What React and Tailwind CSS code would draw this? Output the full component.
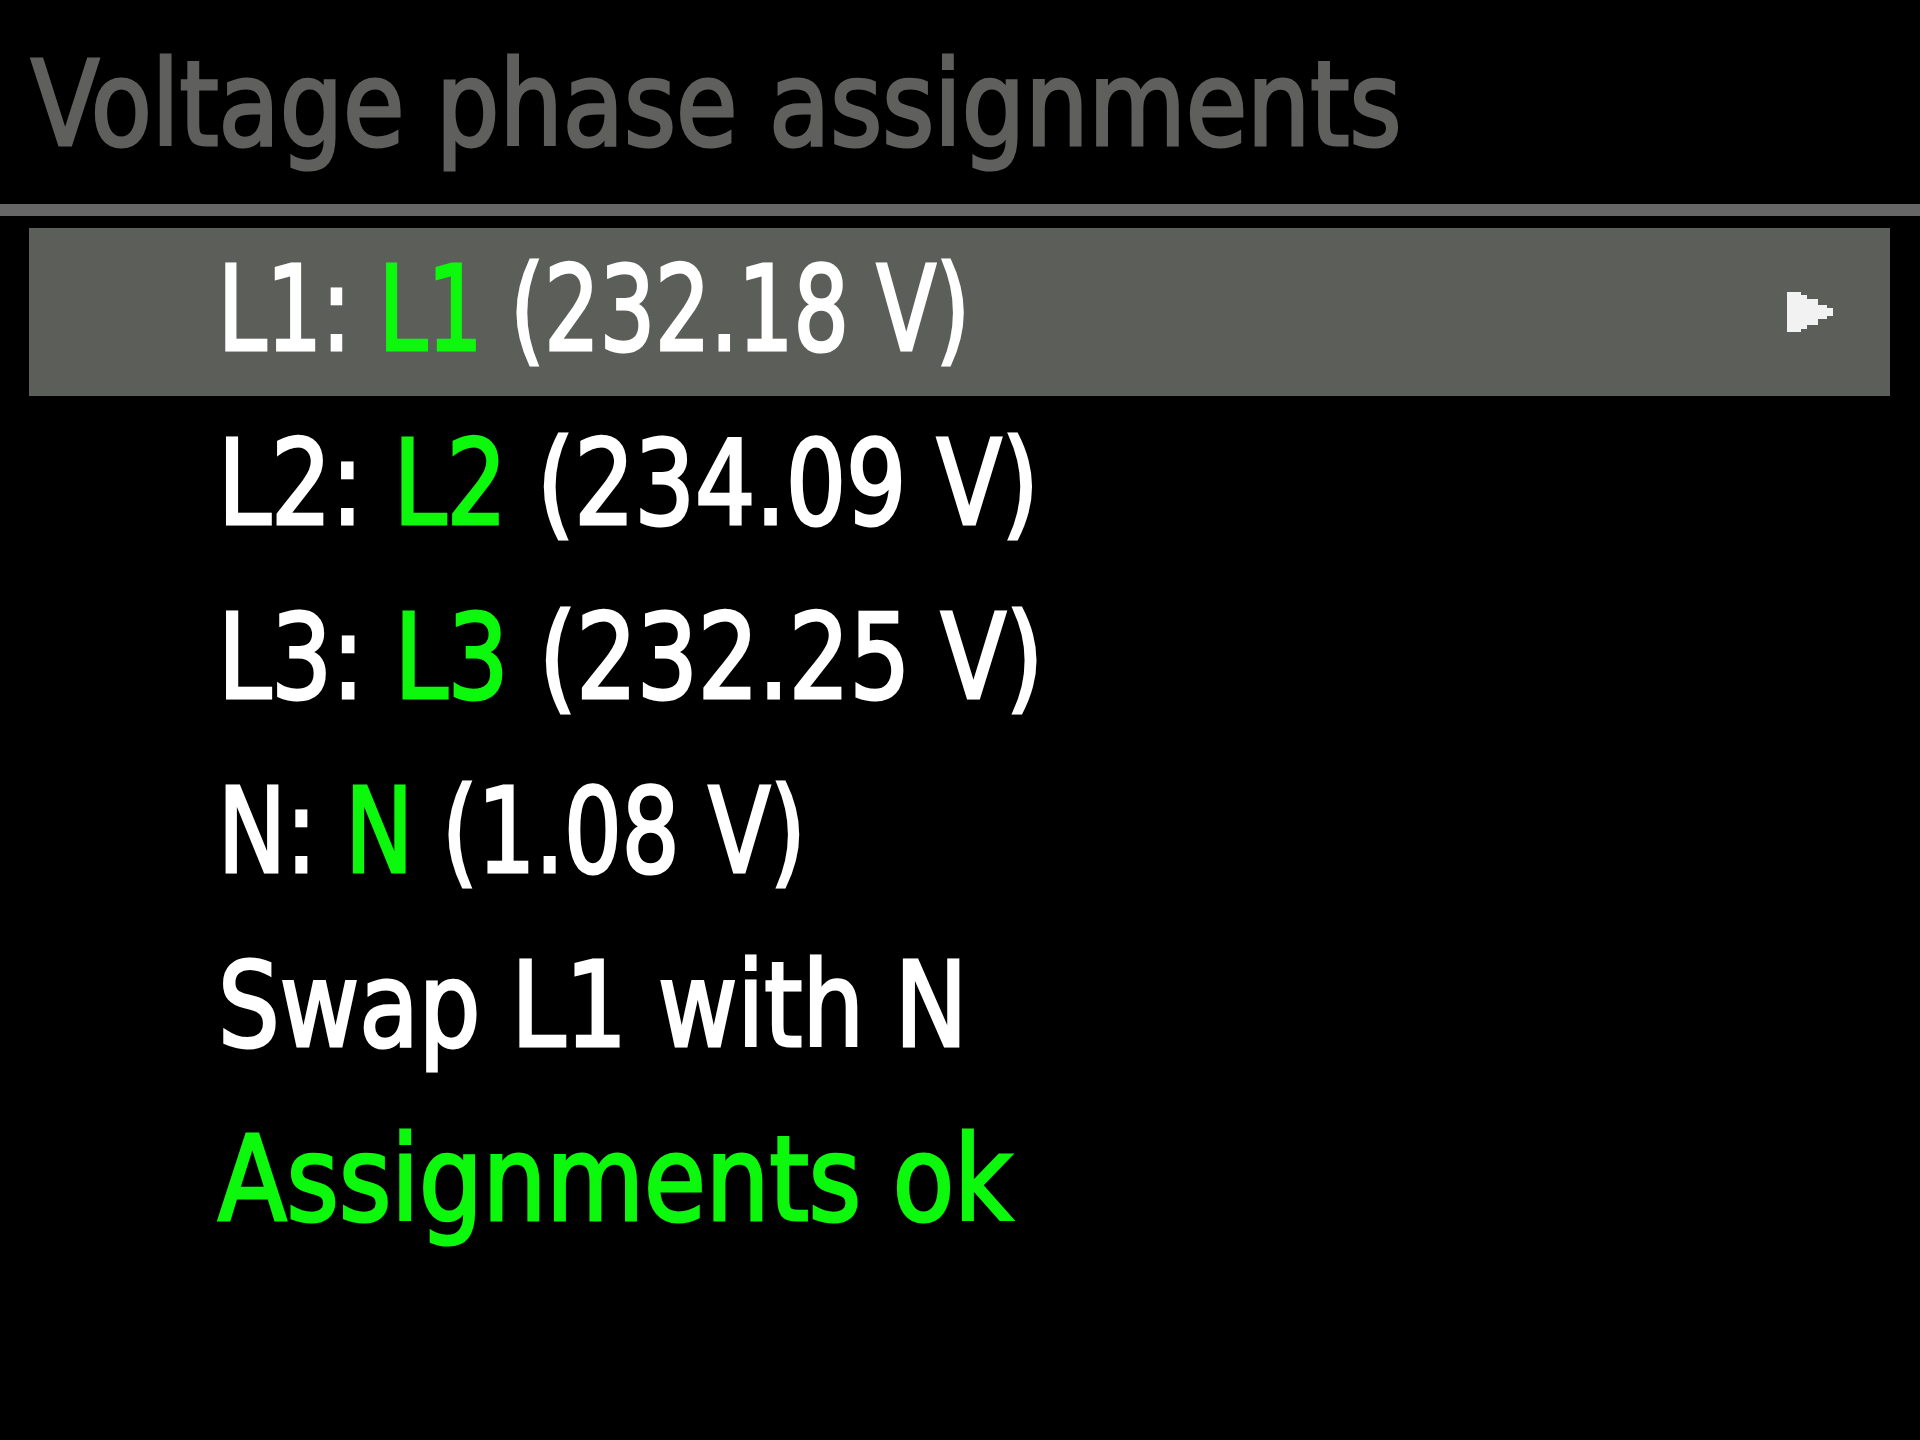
import React from 'react';

const rows = [
  { label: 'L1:', phase: 'L1', value: '(232.18 V)', selected: true, sx: 'scale-x-[0.82]' },
  { label: 'L2:', phase: 'L2', value: '(234.09 V)', sx: 'scale-x-[0.895]' },
  { label: 'L3:', phase: 'L3', value: '(232.25 V)', sx: 'scale-x-[0.9]' },
  { label: 'N:', phase: 'N', value: '(1.08 V)', sx: 'scale-x-[0.855]' },
];

const font = { fontFamily: '"DejaVu Sans Condensed", "DejaVu Sans", sans-serif' };

const Arrow = () => (
  <svg width="46" height="40" viewBox="0 0 46 40" className="shrink-0">
    <path d="M0 0H14V3H20V7H31V13H40V16H46V24H40V27H31V33H20V37H14V40H0Z" fill="#f2f2f2" />
  </svg>
);

const Row = ({ children, selected, sx }) => (
  <div
    className={`flex h-[168px] items-center justify-between pl-[189px] pr-[57px] ${
      selected ? 'bg-[#5c5e5a]' : ''
    }`}
  >
    <span
      className={`-mt-[6px] inline-block origin-left whitespace-nowrap text-[118px] leading-none [-webkit-text-stroke:3px_currentcolor] ${sx}`}
    >
      {children}
    </span>
    {selected && <Arrow />}
  </div>
);

export default function App() {
  return (
    <div className="h-[1440px] w-[1920px] overflow-hidden bg-black text-white" style={font}>
      <div className="flex h-[204px] items-center pl-[31px]">
        <span className="mt-[4px] inline-block origin-left scale-x-[0.94] whitespace-nowrap text-[118px] leading-none text-[#5f605e] [-webkit-text-stroke:3px_currentcolor]">
          Voltage phase assignments
        </span>
      </div>
      <div className="h-[12px] bg-[#666666]" />
      <div className="flex flex-col gap-[6px] pl-[29px] pr-[30px] pt-[12px]">
        {rows.map((r) => (
          <Row key={r.label} selected={r.selected} sx={r.sx}>
            {r.label} <span className="text-[#0cf80c]">{r.phase}</span> {r.value}
          </Row>
        ))}
        <Row sx="scale-x-[0.915]">Swap L1 with N</Row>
        <Row sx="scale-x-[0.945]">
          <span className="text-[#0cf80c]">Assignments ok</span>
        </Row>
      </div>
    </div>
  );
}
